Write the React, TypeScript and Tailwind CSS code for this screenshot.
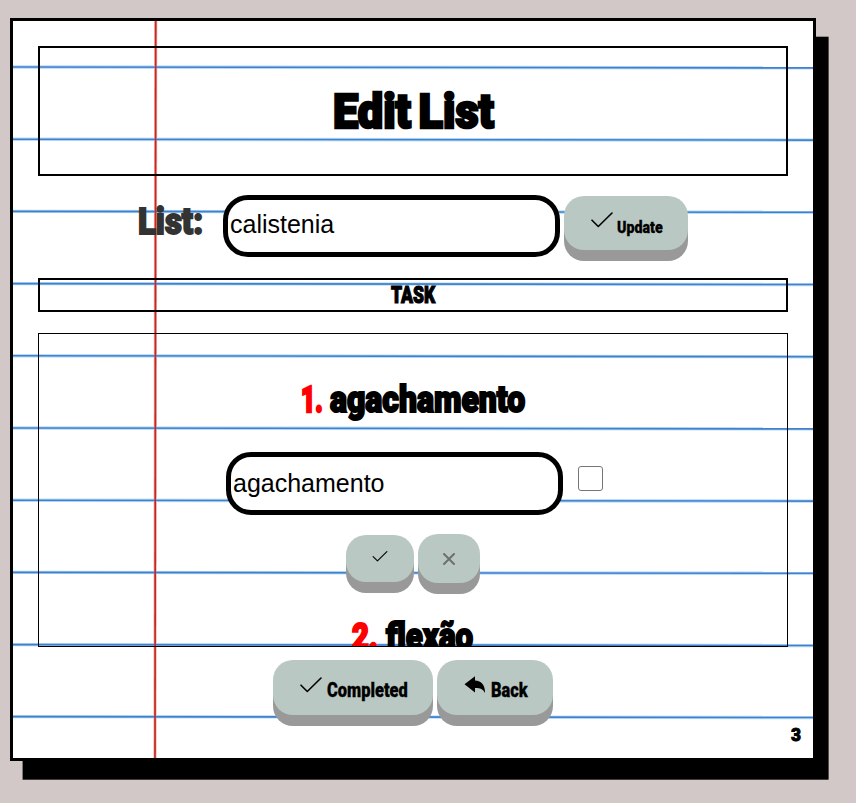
import { useLayoutEffect, useRef } from "react";

type FitProps = { text: string; width: number; className?: string };

// Condensed display lettering: the text is squeezed to the given width.
function Fit({ text, width, className = "" }: FitProps) {
  const ref = useRef<HTMLSpanElement>(null);
  useLayoutEffect(() => {
    const el = ref.current;
    if (el) el.style.transform = `scaleX(${width / el.offsetWidth})`;
  }, [text, width]);
  return (
    <span className="inline-flex shrink-0 justify-start" style={{ width }}>
      <span
        ref={ref}
        className={`inline-block shrink-0 origin-left whitespace-nowrap font-['Roboto','Liberation_Sans',sans-serif] font-black leading-none ${className}`}
      >
        {text}
      </span>
    </span>
  );
}

function Check({ className = "" }: { className?: string }) {
  return (
    <svg viewBox="0 0 22 16" className={className} fill="none" stroke="#000" strokeWidth="1.6">
      <path d="M1 8.2 7.3 14.5 21 1" strokeLinejoin="round" strokeLinecap="round" />
    </svg>
  );
}

function Paper() {
  const rows = [46, 118.2, 190.4, 262.6, 334.8, 407, 479.2, 551.4, 623.6, 695.6];
  return (
    <svg className="absolute inset-0 h-full w-full" viewBox="0 0 800 737" preserveAspectRatio="none">
      <line x1="142.7" x2="142" y1="0" y2="737" stroke="#f4b5ad" strokeWidth="3.2" />
      {rows.map((y) => (
        <g key={y}>
          <line x1="0" x2="800" y1={y} y2={y + 0.9} stroke="#b5daf8" strokeWidth="3.4" />
          <line x1="0" x2="800" y1={y} y2={y + 0.9} stroke="#4280cc" strokeWidth="1.6" />
        </g>
      ))}
      <line x1="142.7" x2="142" y1="0" y2="737" stroke="#c32922" strokeWidth="1.7" />
    </svg>
  );
}

const button = "flex shrink-0 rounded-[20px] bg-[#b9c8c3] shadow-[0_11px_0_#999]";
const field =
  "w-[337px] shrink-0 rounded-[25px] border-[5px] border-black bg-white pl-[2px] font-['Liberation_Sans',Arial,sans-serif] text-[25px] text-black outline-none";

export default function App() {
  return (
    <div className="h-[803px] w-[856px] overflow-hidden bg-[#d2c8c7] pl-[10px] pt-[18px]">
      <main className="relative h-[743px] w-[806px] border-[3px] border-black bg-white shadow-[12.6px_18.7px_0_#000]">
        <Paper />
        <div className="relative flex h-full flex-col px-[25px] pt-[25px]">
          <header className="flex h-[130px] shrink-0 justify-center border-2 border-black pt-[39px]">
            <h1 className="h-[50px]">
              <Fit text="Edit List" width={161} className="text-[49px] [word-spacing:-4px] [-webkit-text-stroke:2.6px_black]" />
            </h1>
          </header>

          <div className="mt-[19px] flex h-[67px] shrink-0 pl-[100px]">
            <label className="mt-[8px] w-[85px] text-[#333]">
              <Fit text="List:" width={65} className="text-[37px] [-webkit-text-stroke:1.8px_#333]" />
            </label>
            <input className={`${field} h-[62px] pb-[3px]`} defaultValue="calistenia" />
            <button className={`${button} ml-[4px] mt-px h-[54px] w-[124px] pl-[27px]`}>
              <Check className="mt-[16px] h-[16px] w-[22px]" />
              <span className="ml-[4px] mt-[23px] h-[18px] leading-none">
                <Fit text="Update" width={46} className="text-[17px] [-webkit-text-stroke:0.3px_black]" />
              </span>
            </button>
          </div>

          <div className="mt-[16px] flex h-[34px] shrink-0 justify-center border-2 border-black pt-[4px]">
            <h2 className="h-6 leading-none">
              <Fit text="TASK" width={44} className="text-[23.5px] [-webkit-text-stroke:1.2px_black]" />
            </h2>
          </div>

          <section className="mt-[21px] flex h-[314px] shrink-0 flex-col overflow-hidden border border-black">
            <h3 className="mt-[47px] flex h-[38px] shrink-0 pl-[262px]">
              <span className="w-[29px]">
                <Fit text="1." width={22} className="text-[37px] text-[#f00] [-webkit-text-stroke:2.6px_#f00]" />
              </span>
              <Fit text="agachamento" width={195} className="text-[37px] [-webkit-text-stroke:2px_black]" />
            </h3>
            <div className="mt-[33px] flex h-[63px] shrink-0 pl-[187px]">
              <input className={`${field} h-[63px] pb-px`} defaultValue="agachamento" />
              <input
                type="checkbox"
                className="ml-[15px] mt-[14px] h-[25px] w-[25px] appearance-none rounded-[3px] border border-[#767676] bg-white"
              />
            </div>
            <div className="mt-[19px] flex h-[60px] shrink-0 pl-[307px]">
              <button className={`${button} mt-px h-[47px] w-[68px] pl-[26px] pt-[16px]`}>
                <Check className="h-[11px] w-[16px]" />
              </button>
              <button className={`${button} ml-[4px] h-[49px] w-[62px] pl-[25px] pt-[19px]`}>
                <svg viewBox="0 0 12 12" className="h-3 w-3" stroke="#6c706f" strokeWidth="2" strokeLinecap="round">
                  <path d="m1 1 10 10M11 1 1 11" />
                </svg>
              </button>
            </div>
            <h3 className="mt-[24px] flex h-[38px] shrink-0 pl-[313px]">
              <span className="w-[34px]">
                <Fit text="2." width={26} className="text-[37px] text-[#f00] [-webkit-text-stroke:2.2px_#f00]" />
              </span>
              <Fit text="flexão" width={87} className="text-[37px] [-webkit-text-stroke:2px_black]" />
            </h3>
          </section>

          <div className="mt-[13px] flex h-[66px] shrink-0 pl-[235px]">
            <button className={`${button} h-[55px] w-[160px] pl-[27px]`}>
              <Check className="mt-[17px] h-[16px] w-[22px]" />
              <span className="ml-[5px] mt-[21px] h-[20px] leading-none">
                <Fit text="Completed" width={81} className="text-[19.5px] [-webkit-text-stroke:0.3px_black]" />
              </span>
            </button>
            <button className={`${button} ml-[4px] h-[55px] w-[116px] pl-[27px]`}>
              <svg viewBox="0 0 22 18" className="mt-[16px] h-[18px] w-[22px]">
                <path d="M.5 8.3 11 .2v4.3c6.5.2 10.3 5 10 12.5-2-3.8-5-5-10-4.9v4.5z" />
              </svg>
              <span className="ml-[5px] mt-[21px] h-[20px] leading-none">
                <Fit text="Back" width={37} className="text-[19.5px] [-webkit-text-stroke:0.3px_black]" />
              </span>
            </button>
          </div>
          <footer className="-mr-[13px] mt-[-1px] flex h-5 shrink-0 justify-end leading-none">
            <Fit text="3" width={10} className="text-[19px] [-webkit-text-stroke:0.9px_black]" />
          </footer>
        </div>
      </main>
    </div>
  );
}
